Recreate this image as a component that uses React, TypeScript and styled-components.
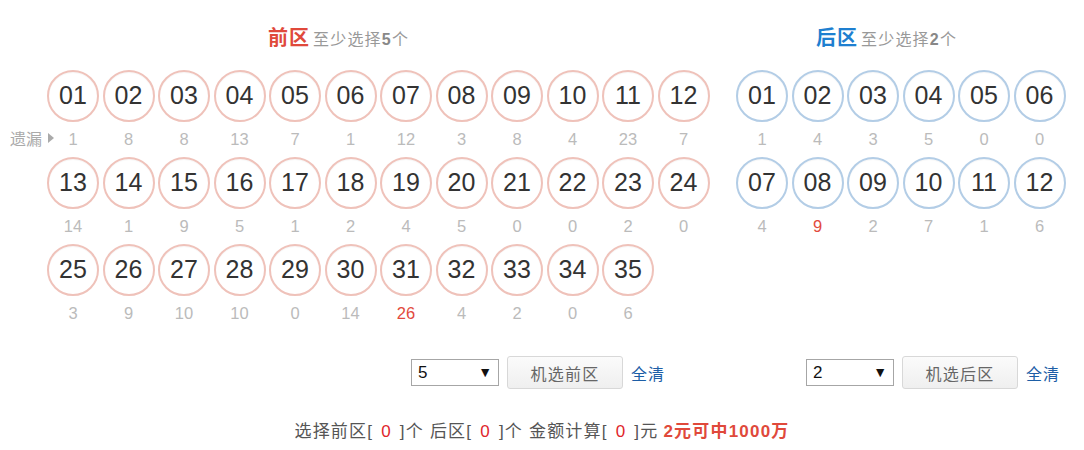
import React from 'react';
import styled, { createGlobalStyle } from 'styled-components';

const GlobalStyle = createGlobalStyle`
  html, body {
    margin: 0;
    padding: 0;
    background: #fff;
  }
  body {
    font-family: "Liberation Sans", "Noto Sans CJK SC", sans-serif;
    color: #333;
  }
`;

type Zone = 'front' | 'back';

const colors = {
  red: '#e0493b',
  blue: '#1e7fd0',
  frontRing: '#efc2ba',
  backRing: '#b3cde6',
  miss: '#bbbbbb',
  hot: '#e24a3d',
  link: '#1d5ea6',
  muted: '#999'
};

const frontMiss = [
  [1, 8, 8, 13, 7, 1, 12, 3, 8, 4, 23, 7],
  [14, 1, 9, 5, 1, 2, 4, 5, 0, 0, 2, 0],
  [3, 9, 10, 10, 0, 14, 26, 4, 2, 0, 6]
];

const backMiss = [
  [1, 4, 3, 5, 0, 0],
  [4, 9, 2, 7, 1, 6]
];

const Page = styled.div`
  width: 1084px;
  height: 450px;
  padding-top: 23px;
  box-sizing: border-box;
`;

const Zones = styled.div`
  display: flex;
  align-items: stretch;
  padding-left: 47px;
  gap: 26.5px;
`;

const Section = styled.div<{ $cols: number }>`
  display: flex;
  flex-direction: column;
  width: ${({ $cols }) => $cols * 52 + ($cols - 1) * 3.5}px;
`;

const Heading = styled.div<{ $indent: number }>`
  height: 30px;
  line-height: 30px;
  padding-left: ${({ $indent }) => $indent}px;
  margin-bottom: 17px;
  white-space: nowrap;
`;

const ZoneName = styled.span<{ $zone: Zone }>`
  font-size: 20px;
  font-weight: bold;
  color: ${({ $zone }) => ($zone === 'front' ? colors.red : colors.blue)};
  letter-spacing: 1px;
`;

const Hint = styled.span`
  margin-left: 3px;
  font-size: 16px;
  color: ${colors.muted};
  letter-spacing: 1.2px;

  b {
    color: #888;
  }
`;

const BallRow = styled.div`
  display: flex;
  gap: 3.5px;
`;

const Ball = styled.div<{ $zone: Zone }>`
  width: 52px;
  height: 52px;
  box-sizing: border-box;
  border-radius: 50%;
  border: 2px solid ${({ $zone }) => ($zone === 'front' ? colors.frontRing : colors.backRing)};
  box-shadow: inset 0 1px 1px rgba(0, 0, 0, 0.04);
  font-size: 25px;
  line-height: 47px;
  text-align: center;
  color: #333;
  cursor: pointer;
`;

const MissRow = styled.div`
  position: relative;
  display: flex;
  gap: 3.5px;
  height: 35px;
`;

const MissCell = styled.div<{ $hot: boolean }>`
  width: 52px;
  line-height: 35px;
  text-align: center;
  font-size: 16.5px;
  color: ${({ $hot }) => ($hot ? colors.hot : colors.miss)};
`;

const MissLabel = styled.div`
  position: absolute;
  right: 100%;
  top: -2px;
  display: flex;
  align-items: center;
  height: 35px;
  margin-right: -7px;
  font-size: 16px;
  color: #aaa;
  white-space: nowrap;
`;

const Arrow = styled.span`
  display: inline-block;
  width: 0;
  height: 0;
  margin-left: 6px;
  border-top: 5px solid transparent;
  border-bottom: 5px solid transparent;
  border-left: 6px solid #aaa;
`;

const Grow = styled.div`
  flex: 1 1 auto;
  min-height: 25px;
`;

const Controls = styled.div<{ $indent: number }>`
  display: flex;
  align-items: center;
  gap: 8px;
  padding-left: ${({ $indent }) => $indent}px;
  height: 33px;
`;

const SelectBox = styled.div`
  position: relative;
  width: 88px;
  height: 27px;
  box-sizing: border-box;
  border: 1px solid #a6a6a6;
  background: #fff;
  font-size: 17px;
  line-height: 25px;
  padding-left: 6px;
  color: #111;
`;

const SelectArrow = styled.span`
  position: absolute;
  right: 6px;
  top: 0;
  font-size: 14px;
  line-height: 24px;
  color: #111;
`;

const PickButton = styled.button`
  width: 116px;
  height: 33px;
  border: 1px solid #d8d8d8;
  border-radius: 3px;
  background: linear-gradient(#fbfbfb, #efefef);
  font-family: inherit;
  font-size: 16px;
  letter-spacing: 1.3px;
  color: #666;
  cursor: pointer;
`;

const ClearLink = styled.a`
  font-size: 16px;
  letter-spacing: 1px;
  color: ${colors.link};
  text-decoration: none;
  cursor: pointer;
`;

const Summary = styled.div`
  margin-top: 33px;
  text-align: center;
  font-size: 17px;
  line-height: 20px;
  color: #555;
  letter-spacing: 1.2px;
  white-space: nowrap;
`;

const Count = styled.span`
  color: #e0252b;
  padding: 0 8px;
`;

const Prize = styled.strong`
  color: ${colors.red};
  margin-left: 5px;
`;

const pad = (n: number) => String(n).padStart(2, '0');

const ZoneBlock = ({
  zone,
  total,
  cols,
  miss,
  name,
  min,
  headIndent,
  ctrlIndent,
  pick,
  picker
}: {
  zone: Zone;
  total: number;
  cols: number;
  miss: number[][];
  name: string;
  min: number;
  headIndent: number;
  ctrlIndent: number;
  pick: number;
  picker: string;
}) => {
  const max = Math.max(...miss.flat());
  return (
    <Section $cols={cols}>
      <Heading $indent={headIndent}>
        <ZoneName $zone={zone}>{name}</ZoneName>
        <Hint>
          至少选择<b>{min}</b>个
        </Hint>
      </Heading>
      {miss.map((row, r) => (
        <React.Fragment key={r}>
          <BallRow>
            {row.map((_, i) => {
              const n = r * cols + i + 1;
              return n <= total ? (
                <Ball key={n} $zone={zone}>
                  {pad(n)}
                </Ball>
              ) : null;
            })}
          </BallRow>
          <MissRow>
            {zone === 'front' && r === 0 && (
              <MissLabel>
                遗漏
                <Arrow />
              </MissLabel>
            )}
            {row.map((v, i) => (
              <MissCell key={i} $hot={v === max}>
                {v}
              </MissCell>
            ))}
          </MissRow>
        </React.Fragment>
      ))}
      <Grow />
      <Controls $indent={ctrlIndent}>
        <SelectBox>
          {pick}
          <SelectArrow>▼</SelectArrow>
        </SelectBox>
        <PickButton>{picker}</PickButton>
        <ClearLink>全清</ClearLink>
      </Controls>
    </Section>
  );
};

const App = () => (
  <>
    <GlobalStyle />
    <Page>
      <Zones>
        <ZoneBlock
          zone="front"
          total={35}
          cols={12}
          miss={frontMiss}
          name="前区"
          min={5}
          headIndent={221}
          ctrlIndent={364}
          pick={5}
          picker="机选前区"
        />
        <ZoneBlock
          zone="back"
          total={12}
          cols={6}
          miss={backMiss}
          name="后区"
          min={2}
          headIndent={80}
          ctrlIndent={70}
          pick={2}
          picker="机选后区"
        />
      </Zones>
      <Summary>
        选择前区[<Count>0</Count>]个 后区[<Count>0</Count>]个 金额计算[<Count>0</Count>]元
        <Prize>2元可中1000万</Prize>
      </Summary>
    </Page>
  </>
);

export default App;
